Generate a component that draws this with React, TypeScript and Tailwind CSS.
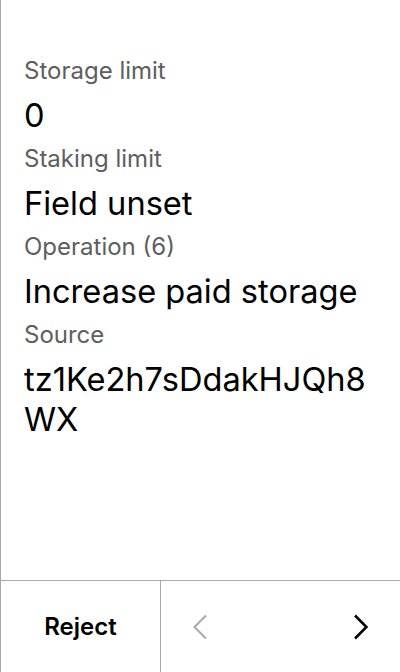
const fields = [
  { label: "Storage limit", value: "0" },
  { label: "Staking limit", value: "Field unset" },
  { label: "Operation (6)", value: "Increase paid storage" },
  { label: "Source", value: "tz1Ke2h7sDdakHJQh8WX" },
];

export default function App() {
  return (
    <div
      className="flex h-[672px] w-[400px] flex-col border-l border-[#a8a8a8] bg-white text-black"
      style={{ fontFamily: "Inter, 'Noto Sans', sans-serif" }}
    >
      <div className="flex flex-1 flex-col gap-[8px] pl-[23px] pr-[20px] pt-[55px]">
        {fields.map((f) => (
          <div key={f.label} className="flex flex-col gap-[8px]">
            <div className="text-[24px] leading-[32px] text-[#5e5e5e]">{f.label}</div>
            <div className="break-all text-[32.6px] leading-[40px]">{f.value}</div>
          </div>
        ))}
      </div>
      <div className="flex h-[92px] border-t border-[#a8a8a8]">
        <button className="flex w-[160px] items-center justify-center border-r border-[#a8a8a8] text-[24px] font-semibold">
          Reject
        </button>
        <div className="flex flex-1 items-center justify-between pl-[32px] pr-[32px]">
          <svg width="14" height="26" viewBox="0 0 14 26" fill="none">
            <polyline points="13,1.5 1.5,13 13,24.5" stroke="#a8a8a8" strokeWidth="2" />
          </svg>
          <svg width="14" height="26" viewBox="0 0 14 26" fill="none">
            <polyline points="1,1.5 12.5,13 1,24.5" stroke="#000" strokeWidth="2.6" />
          </svg>
        </div>
      </div>
    </div>
  );
}
